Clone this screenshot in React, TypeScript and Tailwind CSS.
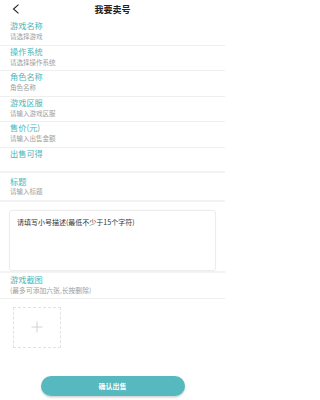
const FONT = { fontFamily: '"Noto Sans CJK SC", "Noto Sans", sans-serif' }

type Field = { label: string; hint: string }

const FIELDS: Field[] = [
  { label: '游戏名称', hint: '请选择游戏' },
  { label: '操作系统', hint: '请选择操作系统' },
  { label: '角色名称', hint: '角色名称' },
  { label: '游戏区服', hint: '请输入游戏区服' },
  { label: '售价(元)', hint: '请输入出售金额' },
]

function FieldRow({ label, hint }: Field) {
  return (
    <div className="border-b border-[#efefef] px-[10px] pb-[2.5px]">
      <div className="text-[8.2px] leading-[11px] text-[#4cb6b9]">{label}</div>
      <div className="text-[6.5px] leading-[11px] text-[#9d9d9d]">{hint}</div>
    </div>
  )
}

export default function App() {
  return (
    <div className="flex h-[400px] w-[225px] flex-col bg-white" style={FONT}>
      <header className="relative flex h-[20px] shrink-0 items-center justify-center">
        <svg className="absolute left-[12px] top-[4px]" width="8" height="10" viewBox="0 0 8 10">
          <polyline points="6.5,0.6 1.5,5 6.5,9.4" fill="none" stroke="#222" strokeWidth="1.1" />
        </svg>
        <h1 className="text-[9px] font-bold text-[#222]">我要卖号</h1>
      </header>

      {FIELDS.map((f) => (
        <FieldRow key={f.label} {...f} />
      ))}

      <div className="h-[25.5px] border-b-[2.5px] border-[#f3f3f3] px-[10px]">
        <div className="text-[8.2px] leading-[11px] text-[#4cb6b9]">出售可得</div>
      </div>

      <div className="border-b-2 border-[#f3f3f3] px-[10px] pt-[2.5px] pb-[4px]">
        <div className="text-[8.2px] leading-[11px] text-[#4cb6b9]">标题</div>
        <div className="text-[6.5px] leading-[9px] text-[#9d9d9d]">请输入标题</div>
      </div>

      <div className="border-b-2 border-[#f3f3f3] px-[9px] pt-[8px]">
        <div className="h-[61px] rounded-[3px] border border-[#ececec] px-[7px] pt-[6px] shadow-[0_0_2px_rgba(0,0,0,0.04)]">
          <p className="text-[7px] leading-[10px] text-[#333]">请填写小号描述(最低不少于15个字符)</p>
        </div>
      </div>

      <div className="border-b border-[#efefef] px-[10px] pt-[1px] pb-[2px]">
        <div className="text-[8.2px] leading-[11px] text-[#4cb6b9]">游戏截图</div>
        <div className="text-[6.8px] leading-[11px] text-[#9d9d9d]">(最多可添加六张,长按删除)</div>
      </div>

      <div className="px-[13px] pt-[8px]">
        <div className="flex h-[41px] w-[48px] items-center justify-center border border-dashed border-[#e2e2e2]">
          <svg width="12" height="12" viewBox="0 0 12 12">
            <path d="M6 0.5V11.5M0.5 6H11.5" stroke="#c8c8c8" strokeWidth="0.8" />
          </svg>
        </div>
      </div>

      <div className="flex flex-1 items-end justify-center pb-[4px]">
        <button className="h-[20px] w-[144px] rounded-full bg-[#55b9bf] text-[7px] font-bold text-white shadow-[0_1.5px_2px_rgba(0,0,0,0.18)]">
          确认出售
        </button>
      </div>
    </div>
  )
}
